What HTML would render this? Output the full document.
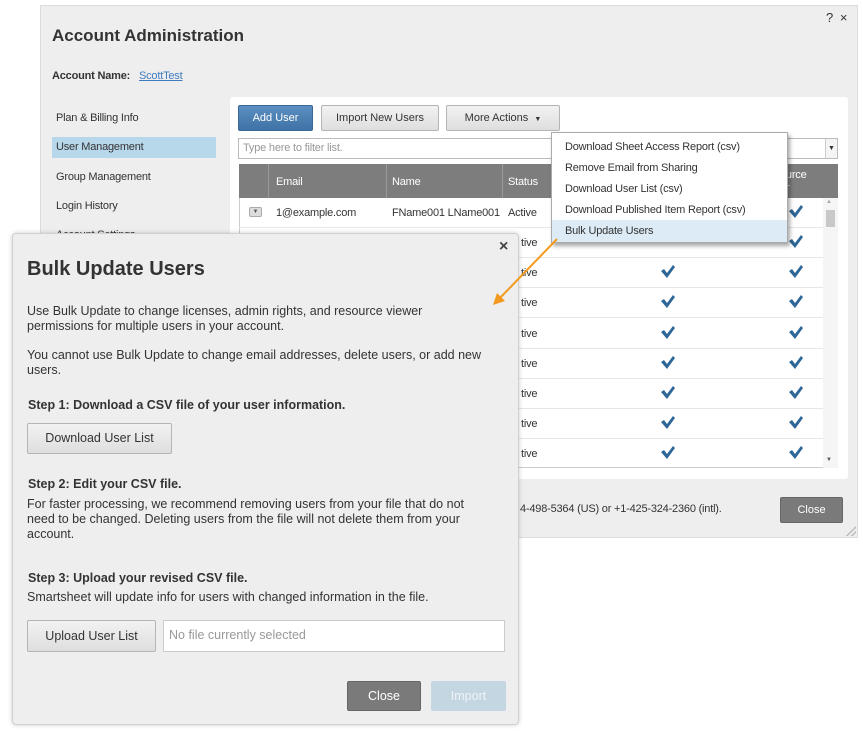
<!DOCTYPE html>
<html><head><meta charset="utf-8"><style>
*{box-sizing:border-box;margin:0;padding:0}
body{width:863px;height:739px;background:#fff;position:relative;overflow:hidden;font-family:"Liberation Sans",Arial,sans-serif;color:#333}
.a{position:absolute}
.t{position:absolute;font-size:11px;white-space:nowrap;letter-spacing:-0.2px}
.btn{position:absolute;background:linear-gradient(#f2f2f2,#dedede);border:1px solid #b5b5b5;border-radius:2px;font-size:11px;text-align:center;color:#333}
.row{position:absolute;left:239px;width:584px;height:1px;background:#e6e6e6}
.d{position:absolute;font-size:12.5px;color:#333;line-height:15px}
.db{position:absolute;font-size:12.5px;font-weight:bold;color:#333}
</style></head><body>
<div class="a" style="left:40px;top:5px;width:818px;height:533px;background:#eeeeee;border:1px solid #dcdcdc"></div>
<div class="t" style="left:826px;top:10px;font-size:13px">?&nbsp;&nbsp;×</div>
<div class="a" style="left:52px;top:26px;font-size:17px;font-weight:bold;color:#333">Account Administration</div>
<div class="t" style="left:52px;top:70px;font-weight:bold">Account Name:</div>
<div class="t" style="left:139px;top:70px;color:#3f7bbf;text-decoration:underline">ScottTest</div>
<div class="t" style="left:56px;top:112px">Plan &amp; Billing Info</div>
<div class="a" style="left:52px;top:137px;width:164px;height:21px;background:#b7d7ea"></div>
<div class="t" style="left:56px;top:141px">User Management</div>
<div class="t" style="left:56px;top:171px">Group Management</div>
<div class="t" style="left:56px;top:200px">Login History</div>
<div class="t" style="left:56px;top:229px">Account Settings</div>
<div class="a" style="left:230px;top:97px;width:618px;height:382px;background:#fff;border-radius:3px"></div>
<div class="btn" style="left:238px;top:105px;width:75px;height:26px;line-height:24px;background:linear-gradient(#5b8fc0,#3f72a6);border-color:#3a6795;color:#fff">Add User</div>
<div class="btn" style="left:321px;top:105px;width:118px;height:26px;line-height:24px">Import New Users</div>
<div class="btn" style="left:446px;top:105px;width:114px;height:26px;line-height:24px">More Actions &nbsp;<span style="font-size:7px">▼</span></div>
<div class="a" style="left:238px;top:138px;width:600px;height:21px;border:1px solid #bbb;background:#fff"></div>
<div class="t" style="left:243px;top:142px;color:#999">Type here to filter list.</div>
<div class="a" style="left:825px;top:139px;width:12px;height:19px;border-left:1px solid #ccc;background:#f4f4f4;font-size:7px;text-align:center;line-height:19px">▼</div>
<div class="a" style="left:239px;top:164px;width:599px;height:34px;background:#7d7d7d"></div>
<div class="a" style="left:268px;top:164px;width:1px;height:34px;background:#999"></div>
<div class="a" style="left:386px;top:164px;width:1px;height:34px;background:#999"></div>
<div class="a" style="left:502px;top:164px;width:1px;height:34px;background:#999"></div>
<div class="t" style="left:276px;top:176px;color:#fff">Email</div>
<div class="t" style="left:392px;top:176px;color:#fff">Name</div>
<div class="t" style="left:508px;top:176px;color:#fff">Status</div>
<div class="t" style="left:780px;top:169px;color:#fff;line-height:13px">ource<br>er</div>
<div class="a" style="left:239px;top:198px;width:599px;height:270px;border:1px solid #ccc;border-top:none"></div>
<div class="a" style="left:823px;top:198px;width:15px;height:270px;background:#f5f5f5"></div>
<div class="a" style="left:826px;top:210px;width:9px;height:17px;background:#c8c8c8"></div>
<div class="a" style="left:826px;top:199px;font-size:6px;color:#aaa">▲</div>
<div class="a" style="left:826px;top:457px;font-size:6px;color:#555">▼</div>
<div class="a" style="left:249px;top:207px;width:13px;height:10px;background:#ddd;border:1px solid #aaa;border-radius:2px;font-size:6px;text-align:center;line-height:9px;color:#555">▼</div>
<div class="t" style="left:276px;top:207px">1@example.com</div>
<div class="t" style="left:392px;top:207px">FName001 LName001</div>
<div class="t" style="left:508px;top:207px">Active</div>
<div class="row" style="top:227px"></div><div class="row" style="top:257px"></div><div class="row" style="top:287px"></div><div class="row" style="top:317px"></div><div class="row" style="top:348px"></div><div class="row" style="top:378px"></div><div class="row" style="top:408px"></div><div class="row" style="top:438px"></div>
<div class="t" style="left:521px;top:237px">tive</div><div class="t" style="left:521px;top:267px">tive</div><div class="t" style="left:521px;top:297px">tive</div><div class="t" style="left:521px;top:328px">tive</div><div class="t" style="left:521px;top:358px">tive</div><div class="t" style="left:521px;top:388px">tive</div><div class="t" style="left:521px;top:418px">tive</div><div class="t" style="left:521px;top:448px">tive</div>
<svg class="a" style="left:0;top:0" width="863" height="739">
<defs><path id="c" d="M-7,-1 L-4,-3 L-1,1 L5,-7 L7,-5 L-1,6 Z" fill="#2e6797"/></defs>
<use href="#c" x="796" y="212"/><use href="#c" x="796" y="242"/>
<use href="#c" x="668" y="272"/><use href="#c" x="796" y="272"/>
<use href="#c" x="668" y="302"/><use href="#c" x="796" y="302"/>
<use href="#c" x="668" y="333"/><use href="#c" x="796" y="333"/>
<use href="#c" x="668" y="363"/><use href="#c" x="796" y="363"/>
<use href="#c" x="668" y="393"/><use href="#c" x="796" y="393"/>
<use href="#c" x="668" y="423"/><use href="#c" x="796" y="423"/>
<use href="#c" x="668" y="453"/><use href="#c" x="796" y="453"/>
</svg>
<div class="t" style="left:520px;top:503px">4-498-5364 (US) or +1-425-324-2360 (intl).</div>
<div class="btn" style="left:780px;top:497px;width:63px;height:26px;line-height:24px;background:#7a7a7a;border-color:#666;color:#fff">Close</div>
<div class="a" style="left:846px;top:526px;width:10px;height:10px;background:linear-gradient(135deg,transparent 50%,#bbb 50%,#bbb 60%,transparent 60%,transparent 75%,#bbb 75%,#bbb 85%,transparent 85%)"></div>
<div class="a" style="left:551px;top:132px;width:237px;height:111px;background:#fff;border:1px solid #aaa;box-shadow:2px 3px 4px rgba(0,0,0,.35)"></div>
<div class="a" style="left:552px;top:220px;width:235px;height:22px;background:#dcebf5"></div>
<div class="t" style="left:565px;top:141px">Download Sheet Access Report (csv)</div>
<div class="t" style="left:565px;top:162px">Remove Email from Sharing</div>
<div class="t" style="left:565px;top:183px">Download User List (csv)</div>
<div class="t" style="left:565px;top:204px">Download Published Item Report (csv)</div>
<div class="t" style="left:565px;top:225px">Bulk Update Users</div>
<div class="a" style="left:12px;top:233px;width:507px;height:492px;background:#eeeeee;border:1px solid #d0d0d0;border-radius:4px;box-shadow:0 0 5px rgba(0,0,0,.2)"></div>
<div class="a" style="left:499px;top:238px;font-size:16px;font-weight:bold;color:#444">×</div>
<div class="a" style="left:27px;top:258px;font-size:20px;font-weight:bold;color:#333">Bulk Update Users</div>
<div class="d" style="left:27px;top:304px">Use Bulk Update to change licenses, admin rights, and resource viewer<br>permissions for multiple users in your account.</div>
<div class="d" style="left:27px;top:348px">You cannot use Bulk Update to change email addresses, delete users, or add new<br>users.</div>
<div class="db" style="left:28px;top:398px">Step 1: Download a CSV file of your user information.</div>
<div class="btn" style="left:27px;top:423px;width:145px;height:31px;line-height:29px;font-size:12.5px">Download User List</div>
<div class="db" style="left:28px;top:477px">Step 2: Edit your CSV file.</div>
<div class="d" style="left:27px;top:497px">For faster processing, we recommend removing users from your file that do not<br>need to be changed. Deleting users from the file will not delete them from your<br>account.</div>
<div class="db" style="left:28px;top:571px">Step 3: Upload your revised CSV file.</div>
<div class="d" style="left:27px;top:590px">Smartsheet will update info for users with changed information in the file.</div>
<div class="btn" style="left:27px;top:620px;width:129px;height:32px;line-height:30px;font-size:12.5px">Upload User List</div>
<div class="a" style="left:163px;top:620px;width:342px;height:32px;background:#fff;border:1px solid #ccc"></div>
<div class="d" style="left:169px;top:628px;color:#999">No file currently selected</div>
<div class="btn" style="left:347px;top:681px;width:74px;height:30px;line-height:28px;font-size:12.5px;background:#7a7a7a;border-color:#666;color:#fff">Close</div>
<div class="btn" style="left:431px;top:681px;width:75px;height:30px;line-height:28px;font-size:12.5px;background:#c5d6e3;border-color:#c5d6e3;color:#eef3f7">Import</div>
<svg class="a" style="left:0;top:0" width="863" height="739">
<line x1="557" y1="239" x2="498" y2="300" stroke="#f39a1e" stroke-width="2"/>
<path d="M493,305 L497,293 L505,301 Z" fill="#f39a1e"/>
</svg>
</body></html>
